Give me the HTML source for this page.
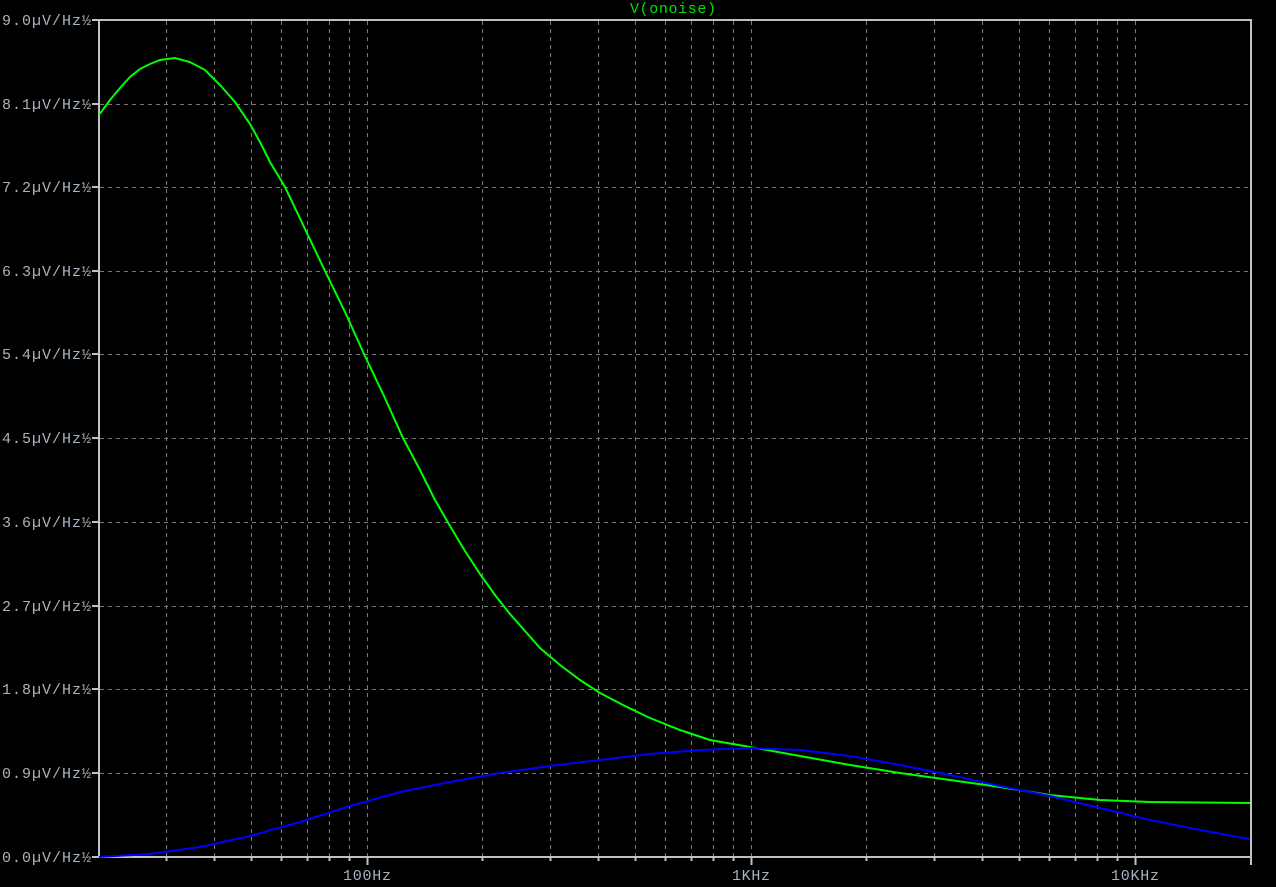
<!DOCTYPE html>
<html><head><meta charset="utf-8"><style>html,body{margin:0;padding:0;background:#000;}svg{display:block}</style></head>
<body>
<svg width="1276" height="887" xmlns="http://www.w3.org/2000/svg">
<rect width="1276" height="887" fill="#000"/>
<g stroke="#7a7a7a" stroke-width="1" stroke-dasharray="4,4" fill="none">
<path d="M166.5 21V856M214.5 21V856M251.5 21V856M281.5 21V856M307.5 21V856M329.5 21V856M349.5 21V856M367.5 21V856M482.5 21V856M550.5 21V856M598.5 21V856M635.5 21V856M665.5 21V856M691.5 21V856M713.5 21V856M733.5 21V856M751.5 21V856M866.5 21V856M934.5 21V856M982.5 21V856M1019.5 21V856M1049.5 21V856M1075.5 21V856M1097.5 21V856M1117.5 21V856M1135.5 21V856"/>
<path d="M100 104.5H1250M100 187.5H1250M100 271.5H1250M100 354.5H1250M100 438.5H1250M100 522.5H1250M100 606.5H1250M100 689.5H1250M100 773.5H1250"/>
</g>
<g stroke="#c0c0c0" stroke-width="2" fill="none">
<rect x="99" y="20" width="1152" height="837"/>
<path d="M92 857H99M92 20H99M92 104H99M92 187H99M92 271H99M92 354H99M92 438H99M92 522H99M92 606H99M92 689H99M92 773H99"/>
<path d="M166.5 857v4M214.5 857v4M251.5 857v4M281.5 857v4M307.5 857v4M329.5 857v4M349.5 857v4M482.5 857v4M550.5 857v4M598.5 857v4M635.5 857v4M665.5 857v4M691.5 857v4M713.5 857v4M733.5 857v4M866.5 857v4M934.5 857v4M982.5 857v4M1019.5 857v4M1049.5 857v4M1075.5 857v4M1097.5 857v4M1117.5 857v4M367.5 857v8M751.5 857v8M1135.5 857v8M1251 857v8"/>
</g>
<g font-family="Liberation Mono, monospace" font-size="15" fill="#a8b4c0" text-anchor="end">
<text x="91" y="25" textLength="89">9.0µV/Hz½</text>
<text x="91" y="109" textLength="89">8.1µV/Hz½</text>
<text x="91" y="192" textLength="89">7.2µV/Hz½</text>
<text x="91" y="276" textLength="89">6.3µV/Hz½</text>
<text x="91" y="359" textLength="89">5.4µV/Hz½</text>
<text x="91" y="443" textLength="89">4.5µV/Hz½</text>
<text x="91" y="527" textLength="89">3.6µV/Hz½</text>
<text x="91" y="611" textLength="89">2.7µV/Hz½</text>
<text x="91" y="694" textLength="89">1.8µV/Hz½</text>
<text x="91" y="778" textLength="89">0.9µV/Hz½</text>
<text x="91" y="862" textLength="89">0.0µV/Hz½</text>
</g>
<g font-family="Liberation Mono, monospace" font-size="15" fill="#a8b4c0" text-anchor="middle">
<text x="367" y="880" textLength="48">100Hz</text>
<text x="751" y="880" textLength="38">1KHz</text>
<text x="1135" y="880" textLength="48">10KHz</text>
</g>
<text x="673" y="13" font-family="Liberation Mono, monospace" font-size="15" fill="#00e000" text-anchor="middle" textLength="86">V(onoise)</text>
<polyline fill="none" stroke="#00ff00" stroke-width="2" points="99,115 110,100 120,88 130,77 140,69 150,64 160,60 175,58 190,62 205,70 220,85 235,102 250,124 260,142 270,162 285,187 305,229 325,271 345,312 364,354 384,396 403,438 420,470 435,500 450,526 465,551 480,574 495,595 510,614 525,631 540,648 560,665 580,680 600,693 625,706 650,718 680,730 710,740 750,747 800,756 850,765 900,773 950,780 1000,787 1050,795 1100,800 1150,802 1250,803"/>
<polyline fill="none" stroke="#0000ff" stroke-width="2" points="99,857 150,854 200,847 250,836 300,822 350,806 400,792 450,782 500,773 550,766 600,760 650,754 700,750 750,748 800,750 850,756 900,765 950,775 1000,786 1050,796 1100,808 1150,820 1200,830 1250,839"/>
</svg>
</body></html>
